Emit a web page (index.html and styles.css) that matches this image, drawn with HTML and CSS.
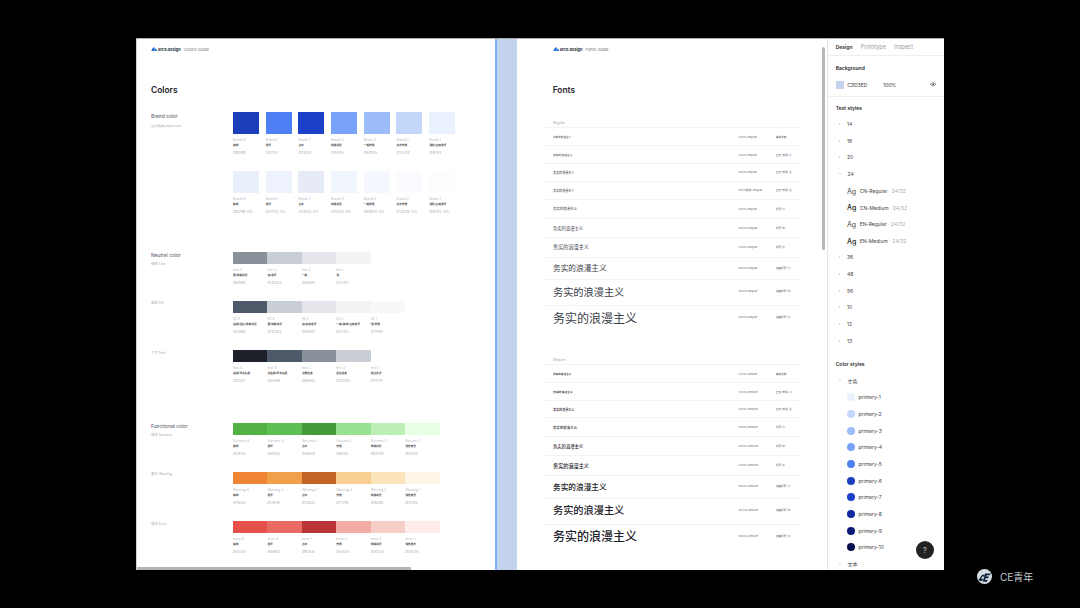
FILE: index.html
```html
<!DOCTYPE html>
<html lang="en">

<head>
    <meta charset="UTF-8">
    <meta name="viewport" content="width=device-width, initial-scale=1.0">
    <title>Arco Design Guide</title>
    <link rel="stylesheet" href="styles.css">
</head>

<body>
    <div class="app">

        <!-- colors frame -->
        <div class="colors">
            <div class="guide-head">
                <svg class="logo-mark" viewBox="0 0 12 8"><path d="M0 8 L4 1 Q5 0 6 1 L7 3 L4 8Z" fill="#1d5fe0"/><path d="M4 8 L7 3 L10 3 L12 8Z" fill="#2a7de8"/><circle cx="9.5" cy="7" r="1.2" fill="#35c08a"/></svg>
                <span class="logo-name">arco.design</span>
                <span class="logo-page">Colors Guide</span>
            </div>
            <h1 class="page-title">Colors</h1>

            <div class="group brand-first">
                <div class="side"><p class="side-title side-title-brand">Brand color</p><p class="side-sub brand-sub">主色/强调色 Brand Color</p></div>
                <div class="chips">
                    <div class="chip tile"><div class="box bg-b6"></div><p class="c-name">Brand-6</p><p class="c-use">常规</p><p class="c-hex">#1B3FBB</p></div>
                    <div class="chip tile"><div class="box bg-b5"></div><p class="c-name">Brand-5</p><p class="c-use">悬浮</p><p class="c-hex">#4F7FF5</p></div>
                    <div class="chip tile"><div class="box bg-b7"></div><p class="c-name">Brand-7</p><p class="c-use">点击</p><p class="c-hex">#1C40C8</p></div>
                    <div class="chip tile"><div class="box bg-b4"></div><p class="c-name">Brand-4</p><p class="c-use">特殊场景</p><p class="c-hex">#7AA2F8</p></div>
                    <div class="chip tile"><div class="box bg-b3"></div><p class="c-name">Brand-3</p><p class="c-use">一般禁用</p><p class="c-hex">#9DBDFA</p></div>
                    <div class="chip tile"><div class="box bg-b2"></div><p class="c-name">Brand-2</p><p class="c-use">文字禁用</p><p class="c-hex">#C3D7FB</p></div>
                    <div class="chip tile"><div class="box bg-b1"></div><p class="c-name">Brand-1</p><p class="c-use">浅色/白底悬浮</p><p class="c-hex">#E9F2FE</p></div>
                </div>
            </div>

            <div class="group near">
                <div class="side"></div>
                <div class="chips">
                    <div class="chip tile"><div class="box bg-a6"></div><p class="c-name">Brand-6</p><p class="c-use">常规</p><p class="c-hex">#1B3FBB, 10%</p></div>
                    <div class="chip tile"><div class="box bg-a5"></div><p class="c-name">Brand-5</p><p class="c-use">悬浮</p><p class="c-hex">#4F7FF5, 10%</p></div>
                    <div class="chip tile"><div class="box bg-a7"></div><p class="c-name">Brand-7</p><p class="c-use">点击</p><p class="c-hex">#1C40C8, 10%</p></div>
                    <div class="chip tile"><div class="box bg-a4"></div><p class="c-name">Brand-4</p><p class="c-use">特殊场景</p><p class="c-hex">#7AA2F8, 10%</p></div>
                    <div class="chip tile"><div class="box bg-a3"></div><p class="c-name">Brand-3</p><p class="c-use">一般禁用</p><p class="c-hex">#9DBDFA, 10%</p></div>
                    <div class="chip tile"><div class="box bg-a2"></div><p class="c-name">Brand-2</p><p class="c-use">文字禁用</p><p class="c-hex">#C3D7FB, 10%</p></div>
                    <div class="chip tile"><div class="box bg-a1"></div><p class="c-name">Brand-1</p><p class="c-use">浅色/白底悬浮</p><p class="c-hex">#E9F2FE, 10%</p></div>
                </div>
            </div>

            <div class="group far">
                <div class="side"><p class="side-title">Neutral color</p><p class="side-sub">线性 Line</p></div>
                <div class="chips">
                    <div class="chip seg"><div class="box bg-n86"></div><p class="c-name">line-4</p><p class="c-use">重/特殊场景</p><p class="c-hex">#86909C</p></div>
                    <div class="chip seg"><div class="box bg-nc9"></div><p class="c-name">line-3</p><p class="c-use">深/悬浮</p><p class="c-hex">#C9CDD4</p></div>
                    <div class="chip seg"><div class="box bg-ne5"></div><p class="c-name">line-2</p><p class="c-use">一般</p><p class="c-hex">#E5E6EB</p></div>
                    <div class="chip seg"><div class="box bg-nf2"></div><p class="c-name">line-1</p><p class="c-use">浅</p><p class="c-hex">#F2F3F5</p></div>
                </div>
            </div>

            <div class="group near">
                <div class="side"><p class="side-sub">填充 Fill</p></div>
                <div class="chips">
                    <div class="chip seg"><div class="box bg-n4e"></div><p class="c-name">fill-5</p><p class="c-use">强调/图标/特殊场景</p><p class="c-hex">#4E5969</p></div>
                    <div class="chip seg"><div class="box bg-nc9"></div><p class="c-name">fill-4</p><p class="c-use">重/特殊场景</p><p class="c-hex">#C9CDD4</p></div>
                    <div class="chip seg"><div class="box bg-ne5"></div><p class="c-name">fill-3</p><p class="c-use">深/灰底悬浮</p><p class="c-hex">#E5E6EB</p></div>
                    <div class="chip seg"><div class="box bg-nf2"></div><p class="c-name">fill-2</p><p class="c-use">一般/常规/白底悬浮</p><p class="c-hex">#F2F3F5</p></div>
                    <div class="chip seg"><div class="box bg-nf7"></div><p class="c-name">fill-1</p><p class="c-use">浅/禁用</p><p class="c-hex">#F7F8FA</p></div>
                </div>
            </div>

            <div class="group near">
                <div class="side"><p class="side-sub">文字 Text</p></div>
                <div class="chips">
                    <div class="chip seg"><div class="box bg-n1d"></div><p class="c-name">text-5</p><p class="c-use">强调/正文标题</p><p class="c-hex">#1D2129</p></div>
                    <div class="chip seg"><div class="box bg-n4e"></div><p class="c-name">text-4</p><p class="c-use">次强调/正文标题</p><p class="c-hex">#4E5969</p></div>
                    <div class="chip seg"><div class="box bg-n86"></div><p class="c-name">text-3</p><p class="c-use">次要信息</p><p class="c-hex">#86909C</p></div>
                    <div class="chip seg"><div class="box bg-nc9"></div><p class="c-name">text-2</p><p class="c-use">置灰信息</p><p class="c-hex">#C9CDD4</p></div>
                    <div class="chip seg"><div class="box"></div><p class="c-name">text-1</p><p class="c-use">纯白文字</p><p class="c-hex">#FFFFFF</p></div>
                </div>
            </div>

            <div class="group farther">
                <div class="side"><p class="side-title">Functional color</p><p class="side-sub">成功 Success</p></div>
                <div class="chips">
                    <div class="chip seg"><div class="box bg-s6"></div><p class="c-name">Success-6</p><p class="c-use">常规</p><p class="c-hex">#52B344</p></div>
                    <div class="chip seg"><div class="box bg-s5"></div><p class="c-name">Success-5</p><p class="c-use">悬浮</p><p class="c-hex">#5EBF54</p></div>
                    <div class="chip seg"><div class="box bg-s7"></div><p class="c-name">Success-7</p><p class="c-use">点击</p><p class="c-hex">#459A3B</p></div>
                    <div class="chip seg"><div class="box bg-s3"></div><p class="c-name">Success-3</p><p class="c-use">禁用</p><p class="c-hex">#96E291</p></div>
                    <div class="chip seg"><div class="box bg-s2"></div><p class="c-name">Success-2</p><p class="c-use">特殊场景</p><p class="c-hex">#BCEFB5</p></div>
                    <div class="chip seg"><div class="box bg-s1"></div><p class="c-name">Success-1</p><p class="c-use">浅色背景</p><p class="c-hex">#E8FFE6</p></div>
                </div>
            </div>

            <div class="group near">
                <div class="side"><p class="side-sub">警示 Warning</p></div>
                <div class="chips">
                    <div class="chip seg"><div class="box bg-w6"></div><p class="c-name">Warning-6</p><p class="c-use">常规</p><p class="c-hex">#F08535</p></div>
                    <div class="chip seg"><div class="box bg-w5"></div><p class="c-name">Warning-5</p><p class="c-use">悬浮</p><p class="c-hex">#F29F4A</p></div>
                    <div class="chip seg"><div class="box bg-w7"></div><p class="c-name">Warning-7</p><p class="c-use">点击</p><p class="c-hex">#C26524</p></div>
                    <div class="chip seg"><div class="box bg-w3"></div><p class="c-name">Warning-3</p><p class="c-use">禁用</p><p class="c-hex">#F7CF90</p></div>
                    <div class="chip seg"><div class="box bg-w2"></div><p class="c-name">Warning-2</p><p class="c-use">特殊场景</p><p class="c-hex">#FBE4BC</p></div>
                    <div class="chip seg"><div class="box bg-w1"></div><p class="c-name">Warning-1</p><p class="c-use">浅色背景</p><p class="c-hex">#FEF5E6</p></div>
                </div>
            </div>

            <div class="group near">
                <div class="side"><p class="side-sub">错误 Error</p></div>
                <div class="chips">
                    <div class="chip seg"><div class="box bg-e6"></div><p class="c-name">error-6</p><p class="c-use">常规</p><p class="c-hex">#E5504A</p></div>
                    <div class="chip seg"><div class="box bg-e5"></div><p class="c-name">error-5</p><p class="c-use">悬浮</p><p class="c-hex">#E86B63</p></div>
                    <div class="chip seg"><div class="box bg-e7"></div><p class="c-name">error-7</p><p class="c-use">点击</p><p class="c-hex">#B93538</p></div>
                    <div class="chip seg"><div class="box bg-e3"></div><p class="c-name">error-3</p><p class="c-use">禁用</p><p class="c-hex">#F0ACA5</p></div>
                    <div class="chip seg"><div class="box bg-e2"></div><p class="c-name">error-2</p><p class="c-use">特殊场景</p><p class="c-hex">#F6CEC8</p></div>
                    <div class="chip seg"><div class="box bg-e1"></div><p class="c-name">error-1</p><p class="c-use">浅色背景</p><p class="c-hex">#FDECE8</p></div>
                </div>
            </div>

            <div class="hscroll"></div>
        </div>

        <div class="canvas-gap"></div>

        <!-- fonts frame -->
        <div class="fonts">
            <div class="guide-head fonts-indent">
                <svg class="logo-mark" viewBox="0 0 12 8"><path d="M0 8 L4 1 Q5 0 6 1 L7 3 L4 8Z" fill="#1d5fe0"/><path d="M4 8 L7 3 L10 3 L12 8Z" fill="#2a7de8"/><circle cx="9.5" cy="7" r="1.2" fill="#35c08a"/></svg>
                <span class="logo-name">arco.design</span>
                <span class="logo-page">Fonts Guide</span>
            </div>
            <h1 class="page-title fonts-indent">Fonts</h1>

            <div class="table">
                <p class="table-label">Regular</p>
                <div class="row h18"><span class="sample s12">务实的浪漫主义</span><span class="meta">12/CN-Regular</span><span class="usage">辅助文案</span></div>
                <div class="row h18"><span class="sample s14">务实的浪漫主义</span><span class="meta">14/CN-Regular</span><span class="usage">正文-常规-小</span></div>
                <div class="row h18"><span class="sample s16">务实的浪漫主义</span><span class="meta">16/CN-Regular</span><span class="usage">正文-常规-大</span></div>
                <div class="row h18"><span class="sample s16">务实的浪漫主义</span><span class="meta">16/CN粗体-Regular</span><span class="usage">正文-常规-大</span></div>
                <div class="row h19"><span class="sample s18">务实的浪漫主义</span><span class="meta">18/CN-Regular</span><span class="usage">标题-小</span></div>
                <div class="row h19"><span class="sample s20">务实的浪漫主义</span><span class="meta">20/CN-Regular</span><span class="usage">标题-中</span></div>
                <div class="row h20"><span class="sample s24">务实的浪漫主义</span><span class="meta">24/CN-Regular</span><span class="usage">标题-大</span></div>
                <div class="row h22"><span class="sample s36">务实的浪漫主义</span><span class="meta">36/CN-Regular</span><span class="usage">运营标题-小</span></div>
                <div class="row h26"><span class="sample s48">务实的浪漫主义</span><span class="meta">48/CN-Regular</span><span class="usage">运营标题-中</span></div>
                <div class="row h26"><span class="sample s56">务实的浪漫主义</span><span class="meta">56/CN-Regular</span><span class="usage">运营标题-大</span></div>
            </div>

            <div class="table table-medium">
                <p class="table-label">Medium</p>
                <div class="row h18"><span class="sample s12">务实的浪漫主义</span><span class="meta">12/CN-Medium</span><span class="usage">辅助文案</span></div>
                <div class="row h18"><span class="sample s14">务实的浪漫主义</span><span class="meta">14/CN-Medium</span><span class="usage">正文-常规-小</span></div>
                <div class="row h17"><span class="sample s16">务实的浪漫主义</span><span class="meta">16/CN-Medium</span><span class="usage">正文-常规-大</span></div>
                <div class="row h19"><span class="sample s18">务实的浪漫主义</span><span class="meta">18/CN-Medium</span><span class="usage">标题-小</span></div>
                <div class="row h19"><span class="sample s20">务实的浪漫主义</span><span class="meta">20/CN-Medium</span><span class="usage">标题-中</span></div>
                <div class="row h20"><span class="sample s24">务实的浪漫主义</span><span class="meta">24/CN-Medium</span><span class="usage">标题-大</span></div>
                <div class="row h22"><span class="sample s36">务实的浪漫主义</span><span class="meta">36/CN-Medium</span><span class="usage">运营标题-小</span></div>
                <div class="row h26"><span class="sample s48">务实的浪漫主义</span><span class="meta">48/CN-Medium</span><span class="usage">运营标题-中</span></div>
                <div class="row h26"><span class="sample s56">务实的浪漫主义</span><span class="meta">56/CN-Medium</span><span class="usage">运营标题-大</span></div>
            </div>

            <div class="vscroll"></div>
        </div>

        <!-- inspector -->
        <div class="panel">
            <div class="tabs"><span class="tab on">Design</span><span class="tab">Prototype</span><span class="tab">Inspect</span></div>

            <div class="bg-sec">
                <p class="sec-title">Background</p>
                <div class="bg-row">
                    <span class="bg-swatch"></span>
                    <span class="bg-hex">C3D3ED</span>
                    <span class="bg-pct">100%</span>
                    <svg class="eye" viewBox="0 0 12 8"><path d="M1 4 Q6 -2 11 4 Q6 10 1 4Z" fill="none" stroke="#333" stroke-width="1"/><circle cx="6" cy="4" r="1.6" fill="#333"/></svg>
                </div>
            </div>

            <p class="tree-head">Text styles</p>
            <div class="tree-row"><i class="arrow"></i>14</div>
            <div class="tree-row"><i class="arrow"></i>16</div>
            <div class="tree-row"><i class="arrow"></i>20</div>
            <div class="tree-row"><i class="arrow open"></i>24</div>
            <div class="style-row"><span class="ag">Ag</span><span>CN-Regular</span><span class="dim">· 24/32</span></div>
            <div class="style-row"><span class="ag ag-m">Ag</span><span>CN-Medium</span><span class="dim">· 24/32</span></div>
            <div class="style-row"><span class="ag">Ag</span><span>EN-Regular</span><span class="dim">· 24/32</span></div>
            <div class="style-row"><span class="ag ag-m">Ag</span><span>EN-Medium</span><span class="dim">· 24/32</span></div>
            <div class="tree-row"><i class="arrow"></i>36</div>
            <div class="tree-row"><i class="arrow"></i>48</div>
            <div class="tree-row"><i class="arrow"></i>56</div>
            <div class="tree-row"><i class="arrow"></i>10</div>
            <div class="tree-row"><i class="arrow"></i>12</div>
            <div class="tree-row"><i class="arrow"></i>13</div>

            <p class="tree-head color-head">Color styles</p>
            <div class="tree-row"><i class="arrow open"></i>主色</div>
            <div class="style-row"><span class="dot bg-p1"></span>primary-1</div>
            <div class="style-row"><span class="dot bg-b2"></span>primary-2</div>
            <div class="style-row"><span class="dot bg-b3"></span>primary-3</div>
            <div class="style-row"><span class="dot bg-b4"></span>primary-4</div>
            <div class="style-row"><span class="dot bg-b5"></span>primary-5</div>
            <div class="style-row"><span class="dot bg-b6"></span>primary-6</div>
            <div class="style-row"><span class="dot bg-b7"></span>primary-7</div>
            <div class="style-row"><span class="dot bg-p8"></span>primary-8</div>
            <div class="style-row"><span class="dot bg-p9"></span>primary-9</div>
            <div class="style-row"><span class="dot bg-p10"></span>primary-10</div>
            <div class="tree-row"><i class="arrow open"></i>文本</div>

            <div class="help">?</div>
        </div>
    </div>

    <div class="mark">
        <svg class="mark-icon" viewBox="0 0 26 26">
            <circle cx="13" cy="13" r="13" fill="#d8dde2"/>
            <path d="M3 18 L9 10 L14 10 L12 13 L9 13 L7 17 L11 17 L9 21 L5 21Z" fill="#10233f"/>
            <path d="M14 8 L24 8 L22 11 L17 11 L16 13 L21 13 L19 16 L15 16 L14 19 L19 19 L17 22 L10 22Z" fill="#10233f"/>
        </svg>
        <span class="mark-text">CE青年</span>
    </div>
</body>

</html>
```

FILE: styles.css
```css
* {
    box-sizing: border-box;
    margin: 0;
    padding: 0;
}

body {
    position: relative;
    width: 1080px;
    height: 608px;
    padding: 38px 136px;
    overflow: hidden;
    background-color: #000;
    font-family: Inter, "Noto Sans CJK SC", sans-serif;
    color: #1d2129;
}

.app {
    display: flex;
    width: 808px;
    height: 532px;
    overflow: hidden;
    background-color: #fff;
    border-top: 1px solid #ababab;
}

/* frames */
.colors {
    position: relative;
    width: 361px;
    padding-left: 14px;
    background-color: #fff;
    border-left: 1px solid #d0d0d0;
    border-right: 2px solid #7eb0fb;
}

.canvas-gap {
    width: 20px;
    background-color: #c3d3ed;
}

.fonts {
    position: relative;
    width: 310px;
    padding-left: 26px;
    padding-right: 26px;
}

.fonts-indent {
    margin-left: 9.7px;
}

.guide-head {
    display: flex;
    align-items: center;
    height: 20px;
}

.logo-mark {
    width: 6.5px;
    height: 4.4px;
    margin-right: 0.6px;
}

.logo-name {
    font-size: 3.9px;
    font-weight: 700;
    color: #2a3140;
}

.logo-page {
    margin-left: 3px;
    font-size: 4.1px;
    color: #6b7280;
}

.page-title {
    height: 12px;
    margin-top: 25px;
    font-size: 8.4px;
    line-height: 12px;
    font-weight: 600;
    color: #1d2129;
}

/* color groups */
.group {
    display: grid;
    grid-template-columns: 82px 1fr;
}

.brand-first {
    margin-top: 16px;
}

.near {
    margin-top: 16.2px;
}

.far {
    margin-top: 38.3px;
}

.farther {
    margin-top: 39.6px;
}

.side-title {
    font-size: 4.9px;
    line-height: 7px;
    color: #4a4f5a;
}

.side-title-brand {
    margin-top: 0.5px;
}

.side-sub {
    margin-top: 0.5px;
    font-size: 3.4px;
    line-height: 4px;
    color: #a4a9b2;
}

.side-title + .side-sub {
    margin-top: 3.5px;
}

.side-title + .brand-sub {
    margin-top: 4px;
    font-size: 2.7px;
}

.chips {
    display: flex;
}

.tile {
    width: 32.7px;
}

.tile .box {
    width: 26px;
    height: 22px;
}

.seg {
    width: 34.45px;
}

.seg .box {
    height: 12.3px;
}

.c-name {
    margin-top: 3.7px;
    font-size: 3.2px;
    line-height: 4px;
    color: #b3b7be;
}

.c-use {
    margin-top: 1.3px;
    font-size: 2.7px;
    line-height: 4px;
    font-weight: 700;
    color: #444;
    white-space: nowrap;
}

.c-hex {
    margin-top: 3.7px;
    font-size: 2.9px;
    line-height: 4px;
    color: #a8acb3;
    white-space: nowrap;
}

.bg-b6 { background-color: #1b3fbb; }
.bg-b5 { background-color: #4f7ff5; }
.bg-b7 { background-color: #1c40c8; }
.bg-b4 { background-color: #7aa2f8; }
.bg-b3 { background-color: #9dbdfa; }
.bg-b2 { background-color: #c3d7fb; }
.bg-b1 { background-color: #e9f2fe; }
.bg-a6 { background-color: #eaeffc; }
.bg-a5 { background-color: #edf2fd; }
.bg-a7 { background-color: #e7ebf8; }
.bg-a4 { background-color: #f0f4fd; }
.bg-a3 { background-color: #f5f8fe; }
.bg-a2 { background-color: #fafbfe; }
.bg-a1 { background-color: #fcfdfe; }
.bg-n1d { background-color: #1d2129; }
.bg-n4e { background-color: #4e5969; }
.bg-n86 { background-color: #8a9099; }
.bg-nc9 { background-color: #c9cdd4; }
.bg-ne5 { background-color: #e5e6eb; }
.bg-nf2 { background-color: #f2f3f5; }
.bg-nf7 { background-color: #f7f8fa; }
.bg-s6 { background-color: #52b344; }
.bg-s5 { background-color: #5ebf54; }
.bg-s7 { background-color: #459a3b; }
.bg-s3 { background-color: #96e291; }
.bg-s2 { background-color: #bcefb5; }
.bg-s1 { background-color: #e8ffe6; }
.bg-w6 { background-color: #f08535; }
.bg-w5 { background-color: #f29f4a; }
.bg-w7 { background-color: #c26524; }
.bg-w3 { background-color: #f7cf90; }
.bg-w2 { background-color: #fbe4bc; }
.bg-w1 { background-color: #fef5e6; }
.bg-e6 { background-color: #e5504a; }
.bg-e5 { background-color: #e86b63; }
.bg-e7 { background-color: #b93538; }
.bg-e3 { background-color: #f0aca5; }
.bg-e2 { background-color: #f6cec8; }
.bg-e1 { background-color: #fdece8; }
.bg-p1 { background-color: #e8f1fd; }
.bg-p8 { background-color: #12299f; }
.bg-p9 { background-color: #0b1a78; }
.bg-p10 { background-color: #050e4f; }

/* scrollbars lie over the frames */
.hscroll {
    position: absolute;
    left: 0;
    bottom: 0;
    width: 274px;
    height: 3.4px;
    background-color: #b4b4b4;
}

.vscroll {
    position: absolute;
    top: 8px;
    right: 2px;
    width: 3px;
    height: 203px;
    border-radius: 2px;
    background-color: #b8b8b8;
}

/* font tables */
.table {
    margin-top: 23.2px;
}

.table-medium {
    margin-top: 25.1px;
}

.table-label {
    height: 8px;
    margin-left: 10px;
    padding-top: 1.5px;
    font-size: 3.3px;
    line-height: 4px;
    color: #a4a9b2;
}

.row {
    display: flex;
    align-items: center;
    padding-left: 10px;
    border-top: 1px solid #f2f3f5;
}

.h17 { height: 17.3px; }
.h18 { height: 17.9px; }
.h19 { height: 19px; }
.h20 { height: 20px; padding-bottom: 1px; }
.h22 { height: 22.4px; padding-bottom: 1.5px; }
.h26 { height: 26px; padding-bottom: 3px; }

.sample {
    flex: 1;
    white-space: nowrap;
    color: #3a3e47;
}

.s12 { font-size: 2.6px; }
.s14 { font-size: 2.8px; }
.s16 { font-size: 3.05px; }
.s18 { font-size: 3.45px; }
.s20 { font-size: 4.3px; }
.s24 { font-size: 5.15px; }
.s36 { font-size: 7.67px; }
.s48 { font-size: 10.2px; }
.s56 { font-size: 12px; }

.table-medium .sample {
    font-weight: 500;
    color: #1d2129;
}

.meta {
    width: 37.4px;
    font-size: 2.7px;
    color: #6a707a;
    white-space: nowrap;
}

.usage {
    width: 25.3px;
    font-size: 2.7px;
    color: #555b66;
    white-space: nowrap;
}

/* inspector */
.panel {
    position: relative;
    width: 117px;
    overflow: hidden;
    background-color: #fff;
    border-left: 1px solid #e5e6eb;
    font-size: 5px;
    color: #333;
}

.tabs {
    display: flex;
    gap: 8px;
    height: 17px;
    padding-left: 7.7px;
    border-bottom: 1px solid #eeeff1;
    font-size: 5.5px;
    line-height: 16px;
    color: #9a9da3;
}

.tab.on {
    font-size: 5px;
    font-weight: 600;
    color: #2a2a2a;
}

.bg-sec {
    height: 41px;
    padding: 8.7px 0 0 7.7px;
    border-bottom: 1px solid #eeeff1;
}

.sec-title {
    font-size: 5px;
    line-height: 6px;
    font-weight: 600;
    color: #2a2a2a;
}

.bg-row {
    display: flex;
    align-items: center;
    height: 8px;
    margin-top: 10px;
}

.bg-swatch {
    width: 8px;
    height: 8px;
    background-color: #c3d3ed;
}

.bg-hex {
    width: 36px;
    margin-left: 3.5px;
}

.bg-pct {
    width: 47px;
}

.eye {
    width: 6.5px;
    height: 4.5px;
}

.tree-head {
    height: 15.67px;
    padding-left: 7.7px;
    margin-top: 3.5px;
    font-size: 5px;
    line-height: 15.67px;
    font-weight: 600;
    color: #2a2a2a;
}

.color-head {
    margin-top: 7.5px;
}

.tree-row,
.style-row {
    display: flex;
    align-items: center;
    height: 16.67px;
    color: #444;
}

.tree-row {
    padding-left: 10.5px;
    padding-bottom: 1px;
}

.arrow {
    width: 0;
    height: 0;
    margin-right: 7.5px;
    border-top: 1px solid transparent;
    border-bottom: 1px solid transparent;
    border-left: 1.5px solid #aaa;
}

.arrow.open {
    border-top: 1.5px solid #aaa;
    border-bottom: 0;
    border-left: 1px solid transparent;
    border-right: 1px solid transparent;
    margin-right: 7px;
}

.style-row {
    gap: 3.5px;
    padding-left: 19px;
}

.style-row .dim {
    margin-left: -2px;
    color: #aaa;
}

.ag {
    font-size: 7px;
    color: #444;
}

.ag-m {
    font-weight: 500;
    color: #222;
}

.dot {
    width: 8px;
    height: 8px;
    border-radius: 50%;
}

.help {
    position: absolute;
    left: 87.7px;
    bottom: 10.7px;
    width: 18px;
    height: 18px;
    border-radius: 50%;
    background-color: #222;
    color: #bbb;
    font-size: 8px;
    line-height: 18px;
    text-align: center;
}

/* watermark on the black surround */
.mark {
    position: absolute;
    left: 977px;
    top: 569px;
    display: flex;
    align-items: center;
    gap: 8px;
}

.mark-icon {
    width: 15px;
    height: 15px;
}

.mark-text {
    font-size: 10px;
    color: #c8ccd0;
}
```
